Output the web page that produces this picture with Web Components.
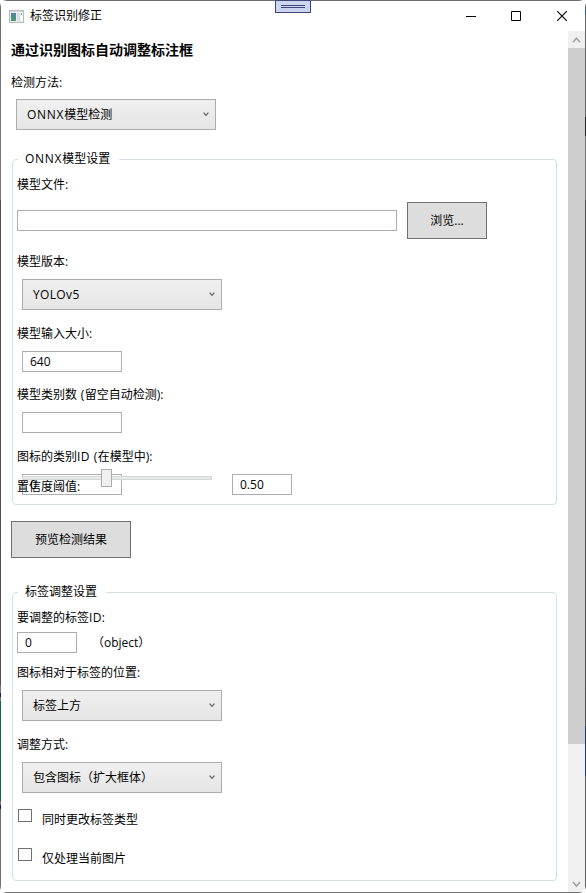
<!DOCTYPE html>
<html lang="zh-CN">
<head>
<meta charset="utf-8">
<title>标签识别修正</title>
<style>
html,body{margin:0;height:100%;background:#fff;overflow:hidden}
body{font:12px/16px "Open Sans","Noto Sans CJK SC",sans-serif;color:#000}
</style>
</head>
<body>
<app-window caption="标签识别修正">
  <text-line style="--size:14px;--weight:700;margin-top:11px">通过识别图标自动调整标注框</text-line>
  <text-line style="margin-top:17px">检测方法:</text-line>
  <combo-box style="margin:8px 0 0 5px"><span style="letter-spacing:.7px">ONNX</span>模型检测</combo-box>
  <group-box style="margin-top:29px;height:346px;--gap:101px">
    <span slot="legend"><span style="letter-spacing:.7px">ONNX</span>模型设置</span>
    <text-line style="margin-top:18px">模型文件:</text-line>
    <flow-row style="height:37px;margin-top:9px;--g:10px">
      <text-box style="width:380px"></text-box>
      <push-button style="width:80px">浏览...</push-button>
    </flow-row>
    <text-line style="margin-top:15px">模型版本:</text-line>
    <combo-box style="margin:9px 0 0 5px"><span style="letter-spacing:.35px">YOLOv5</span></combo-box>
    <text-line style="margin-top:16px">模型输入大小:</text-line>
    <text-box style="margin:9px 0 0 5px">640</text-box>
    <text-line style="margin-top:15px">模型类别数<span style="letter-spacing:.5px"> (</span>留空自动检测):</text-line>
    <text-box style="margin:9px 0 0 5px"></text-box>
    <text-line style="margin-top:16px">图标的类别<span style="letter-spacing:.5px">ID (</span>在模型中):</text-line>
    <threshold-row style="margin-top:4px">
      <text-box slot="id">0</text-box>
      <text-line slot="label">置信度阈值:</text-line>
      <slide-bar slot="slider"></slide-bar>
      <text-box slot="value" style="width:60px">0.50</text-box>
    </threshold-row>
  </group-box>
  <push-button style="width:120px;margin-top:16px">预览检测结果</push-button>
  <group-box style="margin-top:34px;height:289px;--gap:88px">
    <span slot="legend">标签调整设置</span>
    <text-line style="margin-top:18px">要调整的标签<span style="letter-spacing:.3px">ID:</span></text-line>
    <flow-row style="height:21px;margin-top:6px;--g:15px">
      <text-box style="width:60px">0</text-box>
      <text-line>（object）</text-line>
    </flow-row>
    <text-line style="margin-top:12px">图标相对于标签的位置:</text-line>
    <combo-box style="margin:9px 0 0 5px">标签上方</combo-box>
    <text-line style="margin-top:16px">调整方式:</text-line>
    <combo-box style="margin:9px 0 0 5px">包含图标（扩大框体）</combo-box>
    <check-box style="margin-top:16px">同时更改标签类型</check-box>
    <check-box style="margin-top:20px">仅处理当前图片</check-box>
  </group-box>
</app-window>

<script>
function define(name, html) {
  const t = document.createElement('template');
  t.innerHTML = html;
  customElements.define(name, class extends HTMLElement {
    constructor() {
      super();
      this.attachShadow({mode: 'open'}).append(t.content.cloneNode(true));
    }
  });
}

define('text-line', `<style>
:host{display:block;height:16px;line-height:16px;font-size:var(--size,12px);font-weight:var(--weight,400);white-space:nowrap}
</style><slot></slot>`);

define('flow-row', `<style>
:host{display:flex;align-items:center;gap:var(--g,10px)}
</style><slot></slot>`);

define('combo-box', `<style>
:host{display:flex;align-items:center;justify-content:space-between;box-sizing:border-box;width:200px;height:31px;padding:0 6px 0 10px;border:1px solid #acacac;background:linear-gradient(#f0f0f0,#e5e5e5);white-space:nowrap}
svg{display:block;margin-top:-1px}
</style><span><slot></slot></span>
<svg width="6" height="5" viewBox="0 0 6 5"><path d="M.6.6 3 3.4 5.4.6" fill="none" stroke="#606060" stroke-width="1.2"/></svg>`);

define('text-box', `<style>
:host{display:block;box-sizing:border-box;width:100px;height:21px;line-height:19px;padding-left:7px;border:1px solid #abadb3;background:#fff}
</style><slot></slot>`);

define('push-button', `<style>
:host{display:flex;align-items:center;justify-content:center;box-sizing:border-box;height:37px;border:1px solid #707070;background:#ddd;white-space:nowrap}
</style><span><slot></slot></span>`);

define('check-box', `<style>
:host{display:flex;gap:10px;height:19px;padding-left:1px}
i{box-sizing:border-box;width:14px;height:13px;border:1px solid #707070;background:#fff}
span{margin-top:3px}
</style><i></i><span><slot></slot></span>`);

define('slide-bar', `<style>
:host{display:grid;width:190px;height:18px;align-items:center}
.track{grid-area:1/1;box-sizing:border-box;height:4px;border:1px solid #d6d6d6;background:#e7eaea}
.thumb{grid-area:1/1;box-sizing:border-box;width:11px;height:18px;margin-left:79px;border:1px solid #acacac;background:#f0f0f0}
</style><div class="track"></div><div class="thumb"></div>`);

/* The id field, the threshold caption and the slider share one grid cell. */
define('threshold-row', `<style>
:host{display:grid;grid-template-columns:215px 60px;align-items:start}
slot{display:block;grid-area:1/1}
.id{margin:5px 0 0 5px}
.label{margin-top:10px}
.slider{margin-left:5px}
.value{grid-area:1/2;margin-top:5px}
</style><slot class="id" name="id"></slot><slot class="label" name="label"></slot>
<slot class="slider" name="slider"></slot><slot class="value" name="value"></slot>`);

define('group-box', `<style>
:host{display:grid;box-sizing:border-box;width:545px;margin-left:1px}
.body{grid-area:1/1;min-width:0;padding-left:5px}
.frame{grid-area:1/1;border:1px solid #d5dfe5;border-radius:4px}
.legend{grid-area:1/1;justify-self:start;align-self:start;box-sizing:border-box;width:var(--gap);height:16px;margin:-8px 0 0 6px;padding-left:7px;background:#fff;white-space:nowrap}
</style><div class="frame"></div><div class="legend"><slot name="legend"></slot></div><div class="body"><slot></slot></div>`);

define('scroll-bar', `<style>
:host{display:flex;flex-direction:column;width:17px;background:#f0f0f0}
svg{display:block;flex:none}
.thumb{height:696px;background:#cdcdcd}
.space{flex:1}
path{fill:none;stroke:#a3a3a3;stroke-width:1.6}
</style>
<svg width="17" height="17"><path d="M5 11.2 8.5 7.2 12 11.2"/></svg>
<div class="thumb"></div><div class="space"></div>
<svg width="17" height="17"><path d="M5 7 8.5 11 12 7"/></svg>`);

define('title-bar', `<style>
:host{display:flex;align-items:center;height:30px;padding-left:8px}
svg{display:block}
.caption{margin-left:6px;flex:1}
.controls{margin-right:17px}
</style>
<svg width="15" height="13" viewBox="0 0 15 13"><defs><linearGradient id="g" x2=".5" y2="1"><stop stop-color="#4a7fb5"/><stop offset="1" stop-color="#4f9a70"/></linearGradient></defs>
<rect x=".5" y=".5" width="14" height="12" fill="#eee" stroke="#b5b9bd"/><path d="M1 1.5h13" stroke="#d5d8dc"/><rect x="2" y="3" width="5" height="8" fill="url(#g)"/><rect x="8" y="3" width="3" height="8" fill="#d9dde3"/><rect x="12" y="3" width="2" height="8" fill="#fff"/><rect x="12" y="3" width="1" height="2" fill="#75a98a"/></svg>
<span class="caption"><slot></slot></span>
<svg class="controls" width="102" height="10" viewBox="0 0 102 10" fill="none" stroke="#000"><path d="M0 5.5h10M45.500.5h9v9h-9z"/><path d="M91.200.2 100.800 9.800M100.800.2 91.200 9.800" stroke-width="1.150"/></svg>`);

define('app-window', `<style>
:host{display:grid;grid-template:100% / 100%;width:586px;height:893px;overflow:hidden;border-radius:7px;
background:
linear-gradient(#707070,#707070) 0 0/586px 1px no-repeat,
linear-gradient(#707070,#707070) 0 892px/586px 1px no-repeat,
linear-gradient(#707070 0 50px,#777 50px 200px,#515151 200px 685px,#777 685px 693px,#191970 693px 697px,#777 697px 701px,#15633f 701px 801px,#777 801px 805px,#191970 805px 809px,#707070 809px) 0 0/1px 893px no-repeat,
linear-gradient(#555 0 10px,#276078 10px 15px,#666 15px 117px,#222 117px 136px,#777 136px 200px,#515151 200px 690px,#555 690px 726px,#173c70 726px 776px,#606060 776px) 585px 0/1px 893px no-repeat,#fff}
.frame{grid-area:1/1;display:flex;flex-direction:column;margin:1px;background:#fff;border-radius:6px;overflow:hidden}
.client{display:flex;flex:1;min-height:0}
main{flex:1;min-width:0;padding-left:10px;display:flex;flex-direction:column}
main ::slotted(*){flex:none}
.handle{grid-area:1/1;justify-self:start;align-self:start;margin-left:275px}
</style>
<div class="frame"><title-bar></title-bar><div class="client"><main><slot></slot></main><scroll-bar></scroll-bar></div></div>
<svg class="handle" width="36" height="13"><rect x=".5" y=".5" width="35" height="12" fill="#ccd5f0" stroke="#3f4778"/><path d="M6 5.500h24M6 7.500h24" stroke="#3f4778"/></svg>`);

const win = document.querySelector('app-window');
win.shadowRoot.querySelector('title-bar').textContent = win.getAttribute('caption');
</script>
</body>
</html>
